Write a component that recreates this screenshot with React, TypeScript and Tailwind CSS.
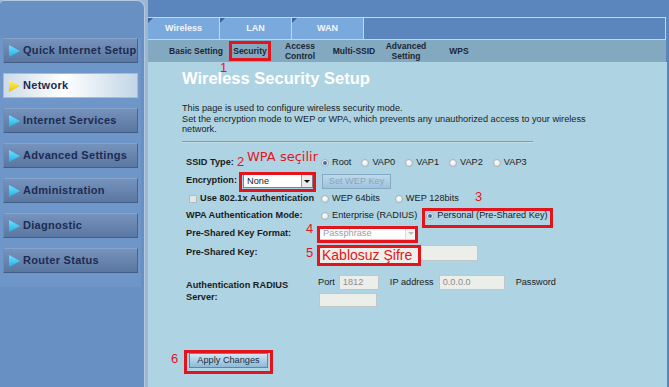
import React from 'react'

const menu = [
  'Quick Internet Setup',
  'Network',
  'Internet Services',
  'Advanced Settings',
  'Administration',
  'Diagnostic',
  'Router Status',
]

const subTabs: { label: string[]; w: string }[] = [
  { label: ['Basic Setting'], w: 'w-[54px]' },
  { label: ['Security'], w: 'w-[54px]' },
  { label: ['Access', 'Control'], w: 'w-[46px]' },
  { label: ['Multi-SSID'], w: 'w-[62px]' },
  { label: ['Advanced', 'Setting'], w: 'w-[42px]' },
  { label: ['WPS'], w: 'w-[64px]' },
]

function Arrow({ active }: { active?: boolean }) {
  const id = active ? 'arrY' : 'arrB'
  return (
    <svg width="11" height="12" viewBox="0 0 11 12" className="shrink-0">
      <defs>
        <linearGradient id={id} x1="0" y1="0" x2="0" y2="1">
          <stop offset="0" stopColor={active ? '#fff36a' : '#6fe0ff'} />
          <stop offset="1" stopColor={active ? '#e8c400' : '#1fb2e6'} />
        </linearGradient>
      </defs>
      <path d="M0 0 L11 6 L0 12 Z" fill={`url(#${id})`} />
    </svg>
  )
}

function MenuItem({ label, active }: { label: string; active?: boolean }) {
  return (
    <div
      className={
        'ml-[3px] w-[135px] h-[25px] flex items-center pl-[5px] gap-[3px] border ' +
        (active
          ? 'bg-[linear-gradient(90deg,#cddbe8,#ffffff_45%,#c3d6e7)] border-[#a3bcd6]'
          : 'bg-[linear-gradient(180deg,#7593bd,#5a77a1)] border-t-[#86a3c9] border-l-[#6d8bb4] border-r-[#48638c] border-b-[#425d86]')
      }
    >
      <Arrow active={active} />
      <span className="text-[11px] font-bold tracking-[0.3px] text-[#1d2b52] whitespace-nowrap">{label}</span>
    </div>
  )
}

function Radio({ label, checked, className = '' }: { label: string; checked?: boolean; className?: string }) {
  return (
    <span className={`flex items-center whitespace-nowrap ${className}`}>
      <span className="w-[8px] h-[8px] rounded-full border border-[#a9b2b8] bg-[radial-gradient(circle_at_40%_35%,#ffffff,#d5dde2)] flex items-center justify-center">
        {checked && <span className="w-[4px] h-[4px] rounded-full bg-[#3b6fb3]" />}
      </span>
      <span className="ml-[3px]">{label}</span>
    </span>
  )
}

function Select({ value, disabled, className = '' }: { value: string; disabled?: boolean; className?: string }) {
  return (
    <span
      className={
        `flex items-center bg-white border ${disabled ? 'border-[#c9cfd2] text-[#9aa0a4]' : 'border-[#7b8288] text-[#1a1a1a]'} ` +
        className
      }
    >
      <span className="flex-1 pl-[3px] leading-none">{value}</span>
      <span
        className={`w-[11px] h-full flex items-center justify-center border-l ${disabled ? 'border-[#d9dee0] bg-[#f4f5f5]' : 'border-[#9aa0a4] bg-[#e9ebec]'}`}
      >
        <span
          className={`border-x-[3px] border-x-transparent border-t-[3px] ${disabled ? 'border-t-[#b9bec1]' : 'border-t-[#111]'}`}
        />
      </span>
    </span>
  )
}

function Field({ value = '', className = '' }: { value?: string; className?: string }) {
  return (
    <span className={`flex items-center bg-[#eceee9] border border-[#c1c7c8] text-[#8d8d8d] pl-[3px] ${className}`}>
      {value}
    </span>
  )
}

export default function App() {
  return (
    <div className="relative w-[669px] h-[387px] overflow-hidden flex bg-[#9db7d3] font-['Liberation_Sans',Arial,sans-serif]">
      {/* Sidebar */}
      <aside className="w-[145px] h-full rounded-tr-[8px] rounded-tl-[4px] bg-[#6890c3] border-r border-t border-[#b3c9e1] flex flex-col">
        <div className="mt-[37px] pb-[14px] w-[141px] bg-[#6e96c8] flex flex-col gap-[10px]">
          {menu.map((m) => (
            <MenuItem key={m} label={m} active={m === 'Network'} />
          ))}
        </div>
      </aside>

      {/* Main */}
      <main className="ml-[3px] flex-1 h-full bg-[#5a86bd] flex flex-col">
        <div className="h-[17px]" />
        <div className="h-[23px] mr-[3px] flex border-y border-r border-[#c3d6ec]">
          {['Wireless', 'LAN', 'WAN'].map((t) => (
            <div
              key={t}
              className="relative w-[72px] h-full bg-[#79a9dd] border-r border-[#c3d6ec] flex items-center justify-center text-[9px] font-bold text-[#f2f7fd]"
            >
              <span className="absolute left-0 top-0 border-t-[5px] border-r-[5px] border-t-[#3f6397] border-r-transparent" />
              {t}
            </div>
          ))}
        </div>
        <div className="h-[22px] mr-[3px] bg-[#83a9c1] flex items-center pl-[21px]">
          {subTabs.map((s) => (
            <div
              key={s.label.join(' ')}
              className={`${s.w} flex flex-col items-center text-[8.5px] font-bold leading-[10px] text-[#1b2733] whitespace-nowrap`}
            >
              {s.label.map((l) => (
                <span key={l}>{l}</span>
              ))}
            </div>
          ))}
        </div>

        <div className="flex-1 mr-[2px] bg-[#aed3e2] pl-[34px] text-[9.2px] text-[#1c1c1c]">
          <h1 className="mt-[10px] h-[12px] leading-[12px] text-[16.5px] font-bold text-white whitespace-nowrap">
            Wireless Security Setup
          </h1>
          <p className="mt-[19px] leading-[10.7px]">
            This page is used to configure wireless security mode.
            <br />
            Set the encryption mode to WEP or WPA, which prevents any unauthorized access to your wireless
            <br />
            network.
          </p>
          <div className="mt-[6px] w-[351px] h-px bg-[#8b989f]" />
          <div className="w-[351px] h-px bg-[#c4dce6]" />

          <div className="ml-[4px]">
            <div className="mt-[11px] h-[18px] flex items-center">
              <div className="w-[132px] font-bold">SSID Type:</div>
              <div className="ml-[3px] flex items-center gap-[10px]">
                <Radio label="Root" checked />
                <Radio label="VAP0" />
                <Radio label="VAP1" />
                <Radio label="VAP2" />
                <Radio label="VAP3" />
              </div>
            </div>

            <div className="h-[18px] flex items-center">
              <div className="w-[132px] flex items-center">
                <span className="font-bold">Encryption:</span>
                <Select value="None" className="ml-[6px] w-[70px] h-[14px]" />
              </div>
              <button
                disabled
                className="ml-[4px] w-[69px] h-[15px] border border-[#86a8c2] bg-[linear-gradient(180deg,#bcdaec,#9ec3dd)] text-[9.2px] text-[#8aa5ba] leading-none"
              >
                Set WEP Key
              </button>
            </div>

            <div className="h-[18px] flex items-center">
              <div className="w-[132px] flex items-center pl-[3px]">
                <span className="w-[8px] h-[8px] border border-[#b3bbc0] bg-[#e2e7ea]" />
                <span className="ml-[3px] font-bold whitespace-nowrap">Use 802.1x Authentication</span>
              </div>
              <Radio label="WEP 64bits" className="ml-[3px]" />
              <Radio label="WEP 128bits" className="ml-[15px]" />
            </div>

            <div className="h-[15px] flex items-center">
              <div className="w-[132px] font-bold whitespace-nowrap">WPA Authentication Mode:</div>
              <Radio label="Enterprise (RADIUS)" className="ml-[3px]" />
              <Radio label="Personal (Pre-Shared Key)" checked className="ml-[9px]" />
            </div>

            <div className="h-[21px] flex items-center">
              <div className="w-[132px] font-bold whitespace-nowrap">Pre-Shared Key Format:</div>
              <Select value="Passphrase" disabled className="ml-[1px] w-[98px] h-[13px]" />
            </div>

            <div className="h-[18px] flex items-center">
              <div className="w-[132px] font-bold">Pre-Shared Key:</div>
              <Field className="w-[160px] h-[16px]" />
            </div>

            <div className="mt-[13px] flex items-center">
              <div className="w-[132px] font-bold leading-[12.5px]">
                Authentication RADIUS
                <br />
                Server:
              </div>
              <div className="flex flex-col gap-[3px]">
                <div className="h-[15px] flex items-center whitespace-nowrap">
                  <span>Port</span>
                  <Field value="1812" className="ml-[4px] w-[40px] h-[15px]" />
                  <span className="ml-[11px]">IP address</span>
                  <Field value="0.0.0.0" className="ml-[5px] w-[66px] h-[15px]" />
                  <span className="ml-[11px]">Password</span>
                </div>
                <Field className="ml-[1px] w-[58px] h-[14px]" />
              </div>
            </div>
          </div>

          <button className="mt-[46px] ml-[7px] w-[79px] h-[15px] border border-[#5f86a8] bg-[linear-gradient(180deg,#d4e7f2,#a9cde4_55%,#8db9d7)] text-[9.2px] text-[#1b2a38] leading-none">
            Apply Changes
          </button>
        </div>
      </main>

      {/* Annotations */}
      <div className="pointer-events-none absolute inset-0 text-[#e8141b]">
        <div className="absolute left-[229px] top-[41px] w-[42px] h-[20px] border-[3px] border-[#e3141c]" />
        <span className="absolute left-[220px] top-[63px] text-[13px] leading-[9px]">1</span>

        <span className="absolute left-[237px] top-[155px] text-[13px] leading-none">2</span>
        <span className="absolute left-[247px] top-[150px] text-[13px] leading-none font-['DejaVu_Sans',sans-serif]">WPA seçilir</span>
        <div className="absolute left-[239px] top-[172px] w-[77px] h-[20px] border-[3px] border-[#e3141c]" />

        <span className="absolute left-[475px] top-[190px] text-[13px] leading-none">3</span>
        <div className="absolute left-[422px] top-[208px] w-[131px] h-[20px] border-[3px] border-[#e3141c]" />

        <span className="absolute left-[306px] top-[222px] text-[13px] leading-none">4</span>
        <div className="absolute left-[317px] top-[226px] w-[101px] h-[17px] border-[3px] border-[#e3141c]" />

        <span className="absolute left-[306px] top-[246px] text-[13px] leading-none">5</span>
        <div className="absolute left-[317px] top-[245px] w-[104px] h-[21px] border-[3px] border-[#e3141c] bg-[#edf0ea] pl-[2px] text-[14px] leading-none whitespace-nowrap">
          Kablosuz Şifre
        </div>

        <span className="absolute left-[171px] top-[352px] text-[13px] leading-none">6</span>
        <div className="absolute left-[184px] top-[350px] w-[89px] h-[24px] border-[3px] border-[#e3141c]" />
      </div>
    </div>
  )
}
